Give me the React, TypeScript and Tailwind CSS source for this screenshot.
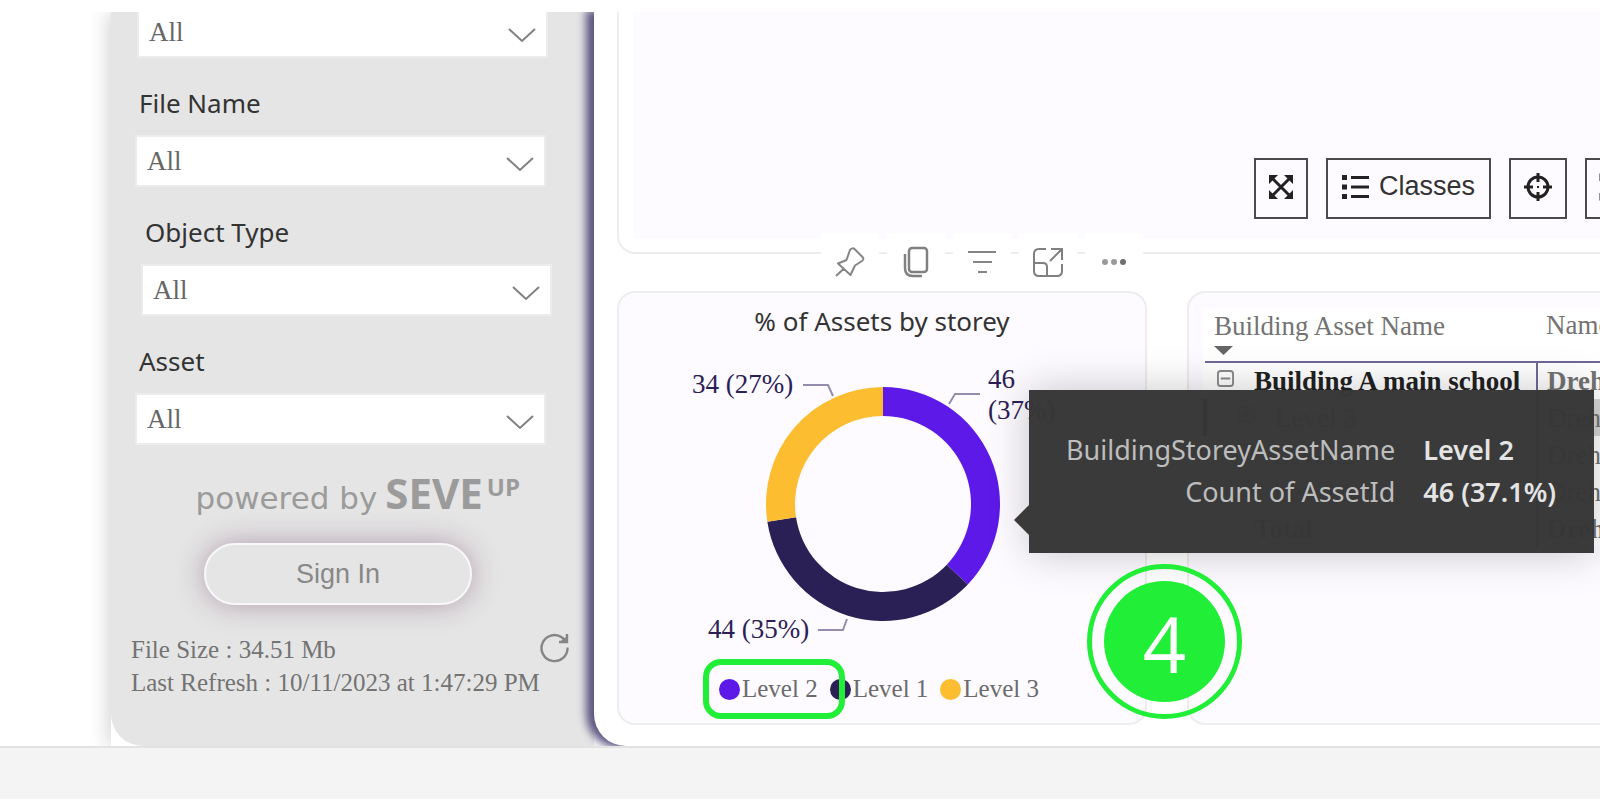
import type { ReactNode } from 'react';

interface Segment {
  label: string;
  count: number;
  color: string;
}

const segments: Segment[] = [
  { label: 'Level 2', count: 46, color: '#5c19e8' },
  { label: 'Level 1', count: 44, color: '#2b2055' },
  { label: 'Level 3', count: 34, color: '#fcbd30' },
];

const filters = [
  { id: 'file-name', label: 'File Name', indent: 'pl-6' },
  { id: 'object-type', label: 'Object Type', indent: 'pl-[30px]' },
  { id: 'asset', label: 'Asset', indent: 'pl-6' },
];

const assetRows = [
  { name: 'Level 3', selected: true },
  { name: 'Level 2', selected: false },
  { name: 'Level 1', selected: false },
];

function arcPath(cx: number, cy: number, outer: number, inner: number, from: number, to: number) {
  const point = (r: number, t: number) => {
    const a = t * Math.PI * 2 - Math.PI / 2;
    return `${cx + r * Math.cos(a)} ${cy + r * Math.sin(a)}`;
  };
  const large = to - from > 0.5 ? 1 : 0;
  return `M${point(outer, from)} A${outer} ${outer} 0 ${large} 1 ${point(outer, to)} L${point(inner, to)} A${inner} ${inner} 0 ${large} 0 ${point(inner, from)} Z`;
}

function FilterSelect({ id, label }: { id: string; label?: string }) {
  return (
    <div className="relative w-[411px] border-2 border-[#ececec] bg-white">
      <select
        id={id}
        aria-label={label}
        className="block h-[48px] w-full appearance-none bg-transparent pl-[10px] font-['Liberation_Serif',serif] text-[27px] text-[#666] outline-none"
      >
        <option>All</option>
      </select>
      <svg
        className="pointer-events-none absolute top-[20px] right-[10px] h-[15px] w-[28px]"
        viewBox="0 0 28 15"
        fill="none"
        stroke="#808080"
        strokeWidth="2"
      >
        <path d="M1 1l13 12L27 1" />
      </svg>
    </div>
  );
}

function Sidebar() {
  return (
    <div className="ml-[111px] w-[483px] shrink-0 bg-white shadow-[-4px_0_18px_rgba(0,0,0,0.16)]">
      <aside className="flow-root h-full rounded-bl-[32px] bg-[#e5e5e5]">
        <div className="-mt-1.5 pl-[26px]">
          <FilterSelect id="model" label="Model" />
        </div>

        {filters.map((f) => (
          <div key={f.id} className={`pt-[27px] ${f.indent}`}>
            <label
              htmlFor={f.id}
              className="mb-[14px] block pl-1 font-['Noto_Sans',sans-serif] text-[26px] leading-[36px] text-[#333]"
            >
              {f.label}
            </label>
            <FilterSelect id={f.id} />
          </div>
        ))}

        <div className="mt-[18px] flex items-baseline justify-end pr-[74px] text-[#9b9b9b]">
          <span className="mr-2 font-['DejaVu_Sans',sans-serif] text-[31px]">powered by</span>
          <span className="font-['Open_Sans',sans-serif] text-[42px] leading-[60px] font-bold">SEVE</span>
          <span className="ml-1 self-start font-['Open_Sans',sans-serif] text-[24px] leading-[48px] font-bold">UP</span>
        </div>

        <div className="mt-5 pl-[93px]">
          <button className="block h-[62px] w-[268px] rounded-full border-2 border-[#f8f8f8] bg-[#e5e5e5] font-['Liberation_Sans',sans-serif] text-[27px] text-[#888] shadow-[0_0_28px_rgba(105,60,95,0.42)]">
            Sign In
          </button>
        </div>

        <div className="mt-7 flex items-start justify-between pr-[25px] pb-9 pl-5">
          <p className="font-['Liberation_Serif',serif] text-[25px] leading-[33px] whitespace-nowrap text-[#737373]">
            File Size : 34.51 Mb
            <br />
            Last Refresh : 10/11/2023 at 1:47:29 PM
          </p>
          <button aria-label="Refresh">
            <svg className="h-[30px] w-[30px]" viewBox="0 0 30 30" fill="none" stroke="#858585" strokeWidth="2.4">
              <path d="M27.500 14.500A13 13 0 1 1 22 4.500l4 3.500" />
              <path d="M27 1v8h-8" />
              <path d="M26 4v4h-5z" fill="#858585" stroke="none" />
            </svg>
          </button>
        </div>
      </aside>
    </div>
  );
}

function ToolButton({ label, className, children }: { label?: string; className: string; children: ReactNode }) {
  return (
    <button
      aria-label={label}
      className={`flex h-[61px] shrink-0 items-center justify-center gap-[9px] border-2 border-[#4a4a4a] pb-1 font-['Liberation_Sans',sans-serif] text-[27px] text-[#333] ${className}`}
    >
      {children}
    </button>
  );
}

function ModelViewer() {
  return (
    <section className="overflow-hidden rounded-bl-[18px] border-b-2 border-l-2 border-[#ededed] pb-[13px] pl-[14px]">
      <div className="flex h-[227px] items-end justify-end gap-[18px] bg-[#fdfbff] pb-5">
        <ToolButton label="Fit to view" className="w-[54px]">
          <svg className="h-[26px] w-[26px]" viewBox="0 0 26 26" fill="#222">
            <path d="M5 5l16 16M21 5L5 21" stroke="#222" strokeWidth="3" />
            <path d="M1 1h9L1 10zM25 1v9L16 1zM1 25v-9L10 25zM25 25h-9L25 16z" />
          </svg>
        </ToolButton>
        <ToolButton className="w-[165px]">
          <svg className="h-[24px] w-[28px]" viewBox="0 0 28 24" fill="#222">
            <path d="M0 0h5v5H0zM0 9.500h5v5H0zM0 19h5v5H0zM9 1h18v3H9zM9 10.500h18v3H9zM9 20h18v3H9z" />
          </svg>
          Classes
        </ToolButton>
        <ToolButton label="Center" className="w-[58px]">
          <svg className="h-[28px] w-[28px]" viewBox="0 0 28 28" fill="none" stroke="#222" strokeWidth="3">
            <circle cx="14" cy="14" r="10" />
            <path d="M14 0v9M14 19v9M0 14h9M19 14h9" />
            <path d="M13 14h2" strokeWidth="2" />
          </svg>
        </ToolButton>
        <ToolButton label="Select" className="-mr-[42px] w-[57px]">
          <svg className="h-[28px] w-[30px]" viewBox="0 0 30 28" fill="none" stroke="#222" strokeWidth="3">
            <path d="M2 8V2h6M22 2h6v6M28 20v6h-6M8 26H2v-6" />
          </svg>
        </ToolButton>
      </div>
    </section>
  );
}

function VisualActions() {
  const cell = 'flex h-[58px] w-[58px] items-center justify-center bg-white';
  return (
    <div className="absolute -top-[60px] right-0.5 flex gap-2">
      <button aria-label="Pin visual" className={cell}>
        <svg className="h-[30px] w-[30px]" viewBox="0 0 30 30" fill="none" stroke="#858585" strokeWidth="2" strokeLinejoin="round">
          <path d="M15 3Q17.500 0 20 2.500L27.500 10Q29.500 12 27 14L20 18.500L15.500 28L3 16.500L11.500 13ZM9.500 21L1 29" />
        </svg>
      </button>
      <button aria-label="Copy visual" className={cell}>
        <svg className="h-[32px] w-[26px]" viewBox="0 0 26 32" fill="none" stroke="#808080" strokeWidth="2">
          <rect x="6" y="2" width="18" height="24" rx="3" strokeWidth="2.500" />
          <path d="M2 8v14q0 8 8 8h9" strokeWidth="2.500" />
        </svg>
      </button>
      <button aria-label="Filters" className={cell}>
        <svg className="h-[30px] w-[30px]" viewBox="0 0 30 30" stroke="#858585" strokeWidth="2">
          <path d="M1 5h28M6 15h19M11 25h9" />
        </svg>
      </button>
      <button aria-label="Focus mode" className={cell}>
        <svg className="h-[30px] w-[30px]" viewBox="0 0 30 30" fill="none" stroke="#808080" strokeWidth="2">
          <path d="M13 2H6Q1 2 1 7v17q0 5 5 5h18q5 0 5-5v-7" />
          <path d="M1 16h9q4 0 4 4v9M17 14L28 3M18 2h11v11" />
        </svg>
      </button>
      <button aria-label="More options" className={cell}>
        <svg className="h-[30px] w-[28px]" viewBox="0 0 28 30">
          <circle cx="5" cy="15" r="3" fill="#999" />
          <circle cx="14" cy="15" r="3" fill="#999" />
          <circle cx="23" cy="15" r="3" fill="#6f6f6f" />
        </svg>
      </button>
    </div>
  );
}

function DonutChart() {
  const total = segments.reduce((s, d) => s + d.count, 0);
  let start = 0;
  return (
    <svg className="mt-[10px] block h-[300px] w-full" viewBox="0 0 526 300" role="img" aria-label="% of Assets by storey">
      {segments.map((s) => {
        const from = start;
        start += s.count / total;
        return <path key={s.label} d={arcPath(264, 153, 117, 88, from, start)} fill={s.color} />;
      })}
      <g fill="none" stroke="#948eae" strokeWidth="2">
        <path d="M184 34h25l5 11" />
        <path d="M330 53l6-10h25" />
        <path d="M199 279h25l4-11" />
      </g>
      <g fill="#2b2055" fontFamily="'Liberation Serif', serif" fontSize="27">
        <text x="73" y="42">34 (27%)</text>
        <text x="369" y="37">46</text>
        <text x="369" y="68">(37%)</text>
        <text x="89" y="287">44 (35%)</text>
      </g>
    </svg>
  );
}

function Tooltip() {
  return (
    <div className="absolute top-[97px] left-[410px] z-10 h-[163px] w-[565px] bg-[rgba(54,54,54,0.98)] pt-[39px] pl-[37px] shadow-[0_0_40px_rgba(0,0,0,0.22)]">
      <span className="absolute top-[115px] -left-[15px] h-[30px] w-[15px] bg-[#3a3a3a] [clip-path:polygon(100%_0,0_50%,100%_100%)]" />
      <dl className="grid grid-cols-[auto_auto] justify-start gap-x-7 font-['Noto_Sans',sans-serif] text-[27px] leading-[42px] whitespace-nowrap">
        <dt className="text-right text-[#bdbdbd]">BuildingStoreyAssetName</dt>
        <dd className="font-semibold text-[#e4e4e4]">Level 2</dd>
        <dt className="text-right text-[#bdbdbd]">Count of AssetId</dt>
        <dd className="font-semibold text-[#e4e4e4]">46 (37.1%)</dd>
      </dl>
    </div>
  );
}

function StepBadge() {
  return (
    <div className="absolute top-[271px] left-[468px] z-20 flex h-[155px] w-[155px] items-center justify-center rounded-full border-[5px] border-[#21ee37]">
      <div className="flex h-[121px] w-[121px] items-center justify-center rounded-full bg-[#21ee37] pt-1 font-['Open_Sans',sans-serif] text-[76px] leading-none font-medium text-white">
        4
      </div>
    </div>
  );
}

function StoreyCard() {
  return (
    <section className="relative h-[434px] w-[530px] shrink-0 rounded-[18px] border-2 border-[#ededed] bg-[#fdfbff]">
      <VisualActions />
      <h2 className="pt-2 text-center font-['Noto_Sans',sans-serif] text-[26px] leading-[40px] text-[#333]">
        % of Assets by storey
      </h2>
      <DonutChart />
      <ul className="mt-[23px] flex gap-3 pl-[100px] font-['Liberation_Serif',serif] text-[25px] leading-[30px] text-[#6b6b6b]">
        {segments.map((s) => (
          <li key={s.label} className="flex items-center gap-[2px] whitespace-nowrap">
            <span className="h-[21px] w-[21px] rounded-full" style={{ backgroundColor: s.color }} />
            {s.label}
          </li>
        ))}
      </ul>
      <div className="absolute top-[366px] left-[84px] h-[60px] w-[142px] rounded-[18px] border-[6px] border-[#21ee37]" />
      <Tooltip />
      <StepBadge />
    </section>
  );
}

function ExpandBox({ open }: { open: boolean }) {
  return (
    <svg className="mb-1.5 h-[17px] w-[17px]" viewBox="0 0 18 18" fill="none" stroke="#8a8a8a" strokeWidth="2">
      <rect x="1" y="1" width="16" height="16" rx="3" />
      <path d={open ? 'M4 9h10' : 'M4 9h10M9 4v10'} />
    </svg>
  );
}

function AssetTable() {
  return (
    <section className="min-w-0 flex-1 overflow-hidden rounded-l-[18px] border-2 border-r-0 border-[#ededed] bg-[#fdfbff] pt-[16px] pl-[14px]">
      <table className="w-[560px] table-fixed border-collapse bg-white font-['Liberation_Serif',serif] text-[27px] leading-[32px] text-[#737373]">
        <thead>
          <tr className="border-b-2 border-[#6f6996]">
            <th className="h-[53px] w-[332px] pl-[9px] text-left font-normal">
              Building Asset Name
              <svg className="mt-[4px] mb-[6px] h-[9px] w-[19px]" viewBox="0 0 19 9" fill="#666">
                <path d="M0 0h19L9.500 9z" />
              </svg>
            </th>
            <th className="pl-[9px] text-left align-top font-normal">Name</th>
          </tr>
        </thead>
        <tbody>
          <tr className="h-[37px] font-bold">
            <td className="border-r-2 border-[#6f6996] pl-3 text-[#222]">
              <span className="flex items-center gap-5 whitespace-nowrap">
                <ExpandBox open />
                Building A main school
              </span>
            </td>
            <td className="pl-[9px]">Drehfl</td>
          </tr>
          {assetRows.map((row) => (
            <tr key={row.name} className={row.selected ? 'h-[37px] bg-[#d6d6d6]' : 'h-[37px]'}>
              <td className={`border-r-2 border-[#6f6996] pl-[31px] ${row.selected ? 'border-l-4 border-l-[#222]' : ''}`}>
                <span className="flex items-center gap-5">
                  <ExpandBox open={false} />
                  {row.name}
                </span>
              </td>
              <td className="pl-[9px]">Drehfl</td>
            </tr>
          ))}
          <tr className="h-[37px] font-bold">
            <td className="border-r-2 border-[#6f6996] pl-[49px]">Total</td>
            <td className="pl-[9px]">Drehfl</td>
          </tr>
        </tbody>
      </table>
    </section>
  );
}

export default function App() {
  return (
    <div className="overflow-hidden bg-white pt-3">
      <div className="flex overflow-hidden">
        <Sidebar />
        <main className="relative min-w-0 flex-1 rounded-bl-[32px] bg-white pb-[21px] pl-[23px] shadow-[-6px_0_9px_2px_#5d5580]">
          <ModelViewer />
          <div className="mt-[37px] flex gap-10">
            <StoreyCard />
            <AssetTable />
          </div>
        </main>
      </div>
      <footer className="relative h-[53px] border-t-2 border-[#e2e2e2] bg-[#f4f4f4]" />
    </div>
  );
}
